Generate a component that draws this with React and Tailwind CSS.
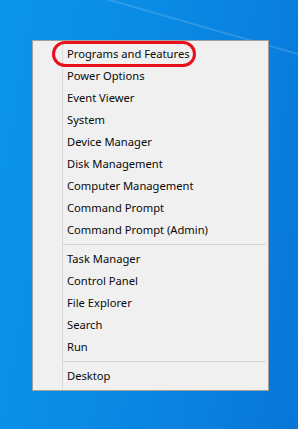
const groups = [
  [
    "Programs and Features",
    "Power Options",
    "Event Viewer",
    "System",
    "Device Manager",
    "Disk Management",
    "Computer Management",
    "Command Prompt",
    "Command Prompt (Admin)",
  ],
  ["Task Manager", "Control Panel", "File Explorer", "Search", "Run"],
  ["Desktop"],
];

function MenuItem({ label, highlight }) {
  return (
    <div className="relative flex h-[22px] items-center pl-[34px] pt-[1px]">
      {highlight && (
        <span className="absolute left-[19px] top-[-2px] h-[26px] w-[144px] rounded-[13px] border-[3px] border-[#e8101c]" />
      )}
      <span className="relative">{label}</span>
    </div>
  );
}

export default function App() {
  return (
    <div className="h-[429px] w-[298px] overflow-hidden bg-[linear-gradient(16deg,transparent_89.2%,rgba(255,255,255,0.18)_89.5%,transparent_89.8%),linear-gradient(100deg,#0b95ea_0%,#0a8ae4_45%,#0876da_100%)] pt-[40px] pl-[32px]">
      <div
        className="relative w-[237px] border border-[#a0a0a0] bg-[#f0f0f0] pt-[2px] pb-[3px] text-[11.2px] text-[#0a0a0a]"
        style={{ fontFamily: '"Noto Sans", "Open Sans", sans-serif' }}
      >
        <div className="absolute left-[29px] top-0 bottom-0 w-px bg-[#dadada]" />
        {groups.map((items, gi) => (
          <div key={gi}>
            {gi > 0 && (
              <div className="flex h-[7px] items-center pl-[30px] pr-[2px]">
                <div className="h-px w-full bg-[#d5d5d5]" />
              </div>
            )}
            {items.map((label) => (
              <MenuItem key={label} label={label} highlight={label === "Programs and Features"} />
            ))}
          </div>
        ))}
      </div>
    </div>
  );
}
